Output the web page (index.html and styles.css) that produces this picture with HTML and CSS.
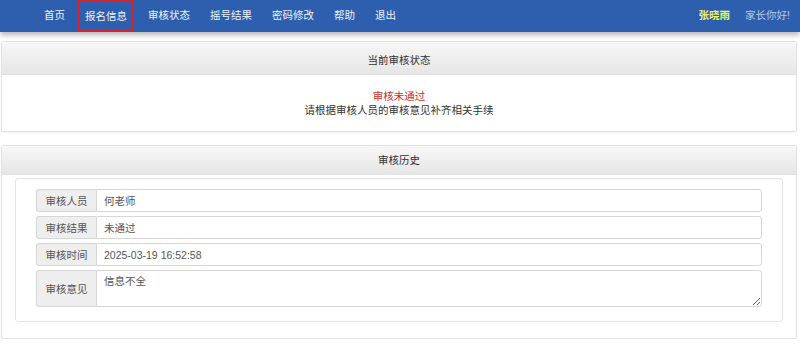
FILE: index.html
```html
<!DOCTYPE html>
<html lang="zh-CN">
<head>
<meta charset="utf-8">
<title>审核状态</title>
<link rel="stylesheet" href="styles.css">
</head>
<body>
<header class="navbar">
  <nav class="nav-left">
    <a class="nav-item">首页</a>
    <a class="nav-item active">报名信息</a>
    <a class="nav-item">审核状态</a>
    <a class="nav-item">摇号结果</a>
    <a class="nav-item">密码修改</a>
    <a class="nav-item">帮助</a>
    <a class="nav-item">退出</a>
  </nav>
  <div class="nav-right">
    <span class="user-name">张晓雨</span>
    <span class="greet">家长你好!</span>
  </div>
</header>

<section class="panel panel-status">
  <div class="panel-heading">当前审核状态</div>
  <div class="panel-body status-body">
    <div class="status-fail">审核未通过</div>
    <div class="status-tip">请根据审核人员的审核意见补齐相关手续</div>
  </div>
</section>

<section class="panel panel-history">
  <div class="panel-heading">审核历史</div>
  <div class="panel-body history-body">
    <div class="well">
      <div class="field">
        <span class="field-label">审核人员</span>
        <div class="field-value">何老师</div>
      </div>
      <div class="field">
        <span class="field-label">审核结果</span>
        <div class="field-value">未通过</div>
      </div>
      <div class="field">
        <span class="field-label">审核时间</span>
        <div class="field-value">2025-03-19 16:52:58</div>
      </div>
      <div class="field field-tall">
        <span class="field-label">审核意见</span>
        <textarea class="field-value field-area" readonly>信息不全</textarea>
      </div>
    </div>
  </div>
</section>
</body>
</html>
```
FILE: styles.css
```css
html, body {
  margin: 0;
  padding: 0;
  background: #ffffff;
  font-family: "Liberation Sans", "Noto Sans CJK SC", sans-serif;
  font-size: 10.5px;
  color: #333;
}

.navbar {
  height: 32px;
  background: #2d5fae;
  display: flex;
  align-items: stretch;
  justify-content: space-between;
  box-shadow: 0 3px 5px rgba(0, 0, 0, 0.28);
  position: relative;
  z-index: 1;
}

.nav-left {
  display: flex;
  align-items: stretch;
  padding-left: 34px;
}

.nav-item {
  display: flex;
  align-items: center;
  padding: 0 10px 3px;
  color: #eef3fb;
  text-decoration: none;
  box-sizing: border-box;
}

.nav-item.active {
  border: 2px solid #d8232e;
  padding: 0 5px 1px;
  margin: 0 4px 0 3px;
}

.nav-right {
  display: flex;
  align-items: center;
  gap: 15px;
  padding: 0 10px 3px 0;
}

.user-name {
  color: #e6f56a;
  font-weight: bold;
}

.greet {
  color: #b9c8e2;
}

.panel {
  margin: 0 3px 0 1px;
  border: 1px solid #e3e3e3;
  border-radius: 2px;
  background: #fff;
  box-shadow: 0 1px 2px rgba(0, 0, 0, 0.06);
}

.panel-status {
  margin-top: 9px;
}

.panel-history {
  margin-top: 13px;
}

.panel-heading {
  text-align: center;
  color: #333;
  background: linear-gradient(#f7f7f7, #e6e6e6);
  border-bottom: 1px solid #e0e0e0;
}

.panel-status .panel-heading {
  height: 32px;
  line-height: 36px;
}

.panel-history .panel-heading {
  height: 28px;
  line-height: 28px;
}

.status-body {
  padding: 14px 0 14px;
  text-align: center;
  line-height: 14px;
}

.status-fail {
  color: #c9302c;
}

.status-tip {
  color: #333;
}

.history-body {
  padding: 3px 13px 16px 13px;
}

.well {
  border: 1px solid #e6e6e6;
  border-radius: 3px;
  padding: 10px 20px 14px 20px;
  display: flex;
  flex-direction: column;
  gap: 4px;
  box-shadow: inset 0 1px 1px rgba(0, 0, 0, 0.03);
}

.field {
  display: flex;
  height: 23px;
}

.field-tall {
  height: 37px;
}

.field-label {
  flex: 0 0 60px;
  display: flex;
  align-items: center;
  justify-content: center;
  background: #eeeeee;
  border: 1px solid #d6d6d6;
  border-right: none;
  border-radius: 3px 0 0 3px;
  color: #555;
  box-sizing: border-box;
}

.field-value {
  flex: 1;
  display: flex;
  align-items: center;
  padding: 0 7px;
  border: 1px solid #d6d6d6;
  border-radius: 0 3px 3px 0;
  color: #555;
  background: #fff;
  box-sizing: border-box;
  font-family: "Liberation Sans", "Noto Sans CJK SC", sans-serif;
  font-size: 10.5px;
}

.field-area {
  display: block;
  margin: 0;
  padding: 3px 7px;
  height: 37px;
  resize: vertical;
  outline: none;
  line-height: 14px;
}
```
